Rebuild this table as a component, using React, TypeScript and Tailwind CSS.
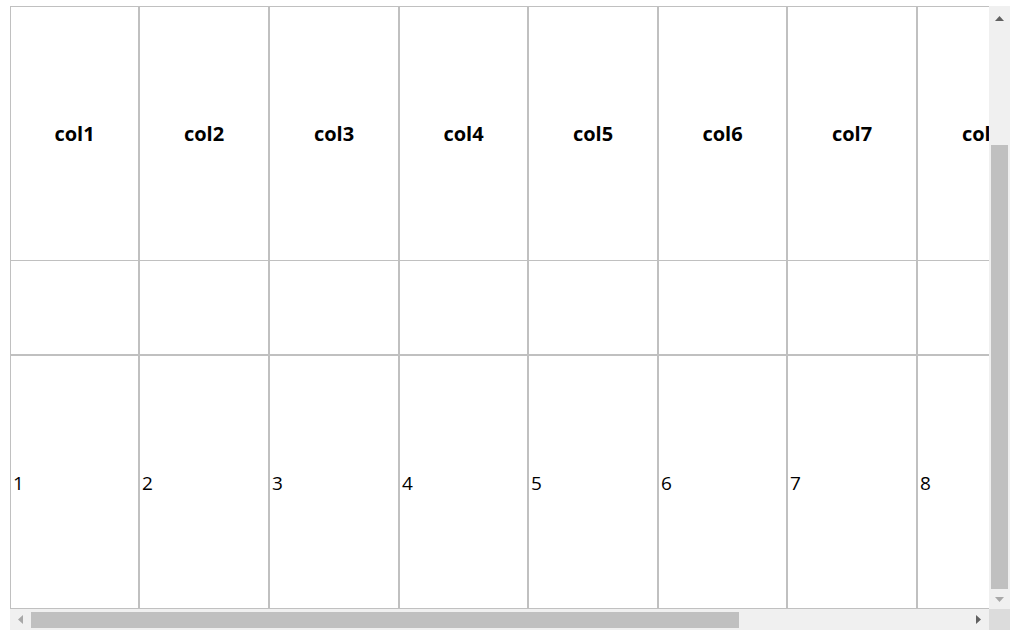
import React from "react";

const cols = [128, 130, 130, 129, 130, 129, 130, 130];

function Up({ c }: { c: string }) {
  return (
    <svg width="9" height="5" viewBox="0 0 9 5"><polygon points="0,5 9,5 4.5,0" fill={c} /></svg>
  );
}
function Down({ c }: { c: string }) {
  return (
    <svg width="9" height="5" viewBox="0 0 9 5"><polygon points="0,0 9,0 4.5,5" fill={c} /></svg>
  );
}
function Left({ c }: { c: string }) {
  return (
    <svg width="5" height="9" viewBox="0 0 5 9"><polygon points="5,0 5,9 0,4.5" fill={c} /></svg>
  );
}
function Right({ c }: { c: string }) {
  return (
    <svg width="5" height="9" viewBox="0 0 5 9"><polygon points="0,0 0,9 5,4.5" fill={c} /></svg>
  );
}

export default function App() {
  return (
    <div className="w-[1026px] h-[642px] bg-white pt-[6px] pl-[10px]" style={{ fontFamily: '"Open Sans", "Noto Sans", sans-serif' }}>
      <div className="w-[1000px] h-[624px] flex flex-col">
        <div className="flex h-[603px]">
          <div className="w-[979px] h-[603px] overflow-hidden">
            <div className="flex flex-col w-[1100px] border-t border-[#c0c0c0]">
              <div className="flex h-[254px] border-b border-[#c0c0c0]">
                {cols.map((w, i) => (
                  <div key={i} className={`shrink-0 flex items-center justify-center font-bold text-[20px] text-black ${i === 0 ? "border-l" : "border-l-2"} border-[#c0c0c0]`} style={{ width: w }}>
                    col{i + 1}
                  </div>
                ))}
              </div>
              <div className="flex h-[95px] border-b-2 border-[#c0c0c0]">
                {cols.map((w, i) => (
                  <div key={i} className={`shrink-0 ${i === 0 ? "border-l" : "border-l-2"} border-[#c0c0c0]`} style={{ width: w }} />
                ))}
              </div>
              <div className="flex h-[253px] border-b border-[#c0c0c0]">
                {cols.map((w, i) => (
                  <div key={i} className={`shrink-0 flex items-center pl-[2px] pt-[3px] text-[19px] text-black ${i === 0 ? "border-l" : "border-l-2"} border-[#c0c0c0]`} style={{ width: w }}>
                    {i + 1}
                  </div>
                ))}
              </div>
            </div>
          </div>
          <div className="w-[21px] h-[603px] bg-[#f0f0f0] flex flex-col items-center">
            <div className="h-[24px] flex items-center justify-center"><Up c="#606060" /></div>
            <div className="flex-1 w-full flex flex-col px-[2px]">
              <div className="h-[115px]" />
              <div className="h-[444px] bg-[#c0c0c0] w-[17px]" />
            </div>
            <div className="h-[20px] flex items-center justify-center"><Down c="#a8a8a8" /></div>
          </div>
        </div>
        <div className="flex h-[21px]">
          <div className="w-[979px] h-[21px] bg-[#f0f0f0] flex items-center">
            <div className="w-[21px] flex items-center justify-center"><Left c="#a8a8a8" /></div>
            <div className="w-[708px] h-[16px] bg-[#c0c0c0]" />
            <div className="flex-1" />
            <div className="w-[21px] flex items-center justify-center"><Right c="#606060" /></div>
          </div>
          <div className="w-[21px] h-[21px] bg-[#dcdcdc]" />
        </div>
      </div>
    </div>
  );
}
